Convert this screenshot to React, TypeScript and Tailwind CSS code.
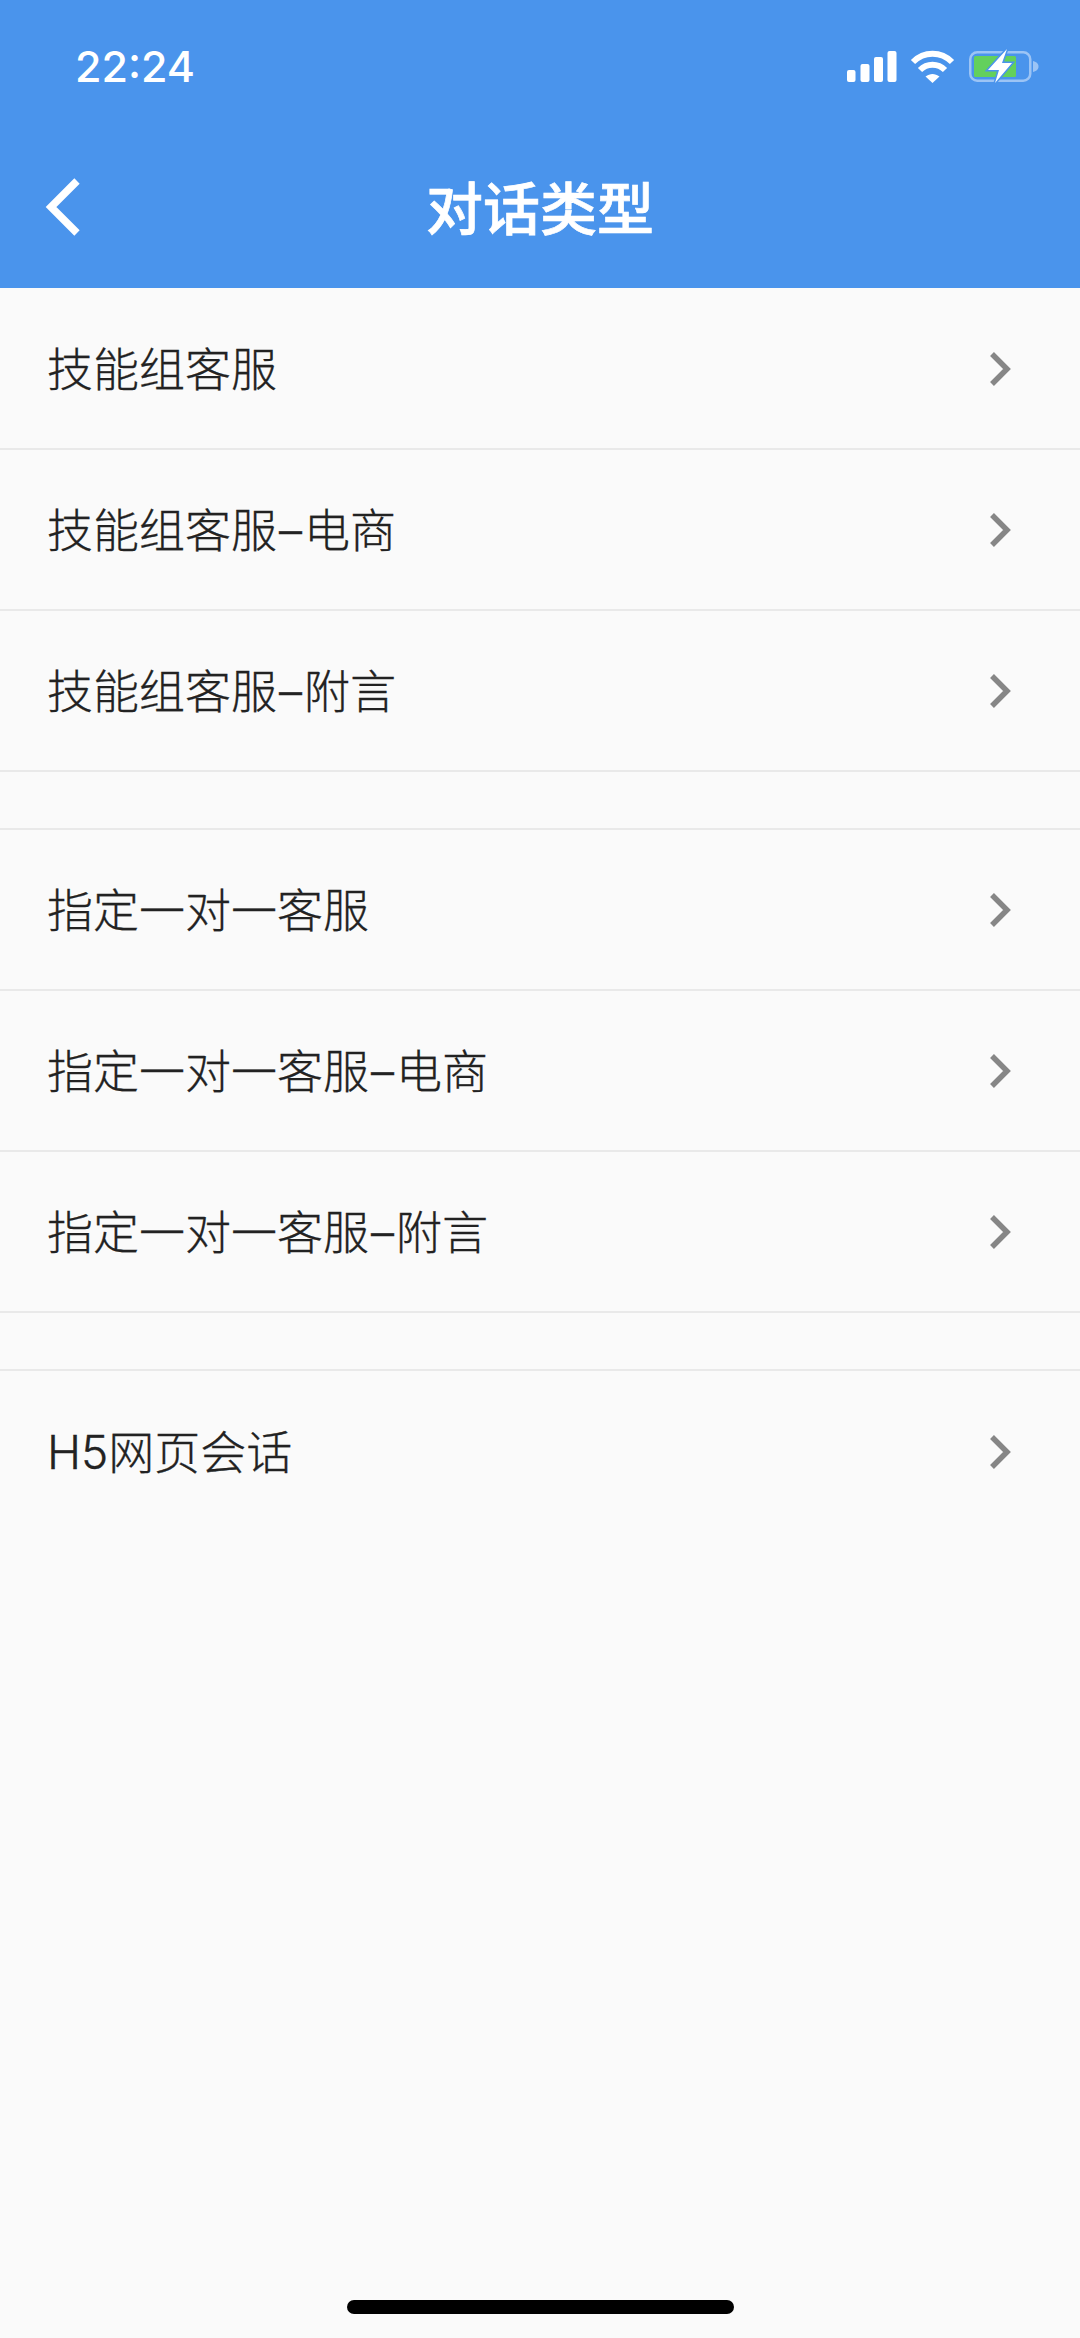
const groups = [
  ["技能组客服", "技能组客服-电商", "技能组客服-附言"],
  ["指定一对一客服", "指定一对一客服-电商", "指定一对一客服-附言"],
  ["H5网页会话"],
];

function StatusIcons() {
  return (
    <svg width="194" height="38" viewBox="0 0 194 38" className="mr-[39px]">
      <rect x="0" y="23" width="8.500" height="12" rx="2" fill="#fff" />
      <rect x="13.500" y="17" width="9" height="18" rx="2" fill="#fff" />
      <rect x="27" y="10" width="9" height="25" rx="2" fill="#fff" />
      <rect x="40.500" y="4" width="9" height="31" rx="2" fill="#fff" />
      <path d="M66 15C77 4 94 4 105 15" fill="none" stroke="#fff" strokeWidth="6" />
      <path d="M73 23C80 16 91 16 98 23" fill="none" stroke="#fff" strokeWidth="6" />
      <path d="M78.500 29.500C83 26 88 26 92.500 29.500L85.500 36Z" fill="#fff" />
      <rect x="123.250" y="5.250" width="60" height="28.500" rx="7" fill="none" stroke="#9cc4f5" strokeWidth="2.500" />
      <rect x="127" y="9" width="42" height="21" rx="1.500" fill="#63d05c" />
      <path d="M186 14C190 15 191.500 17 191.500 19.500C191.500 22 190 24 186 25Z" fill="#9cc4f5" />
      <path d="M160 2L141 23H152L148 36L165 16H155Z" fill="#fff" stroke="#4a94ec" strokeWidth="3" paintOrder="stroke" />
    </svg>
  );
}

function Row({ label, bordered }: { label: string; bordered: boolean }) {
  const [head, tail] = label.split("-");
  return (
    <div className={`flex h-[161px] items-center justify-between pl-[47px] pr-[68px] ${bordered ? "border-b-2 border-[#e9e9e9]" : ""}`}>
      <span
        className="text-[46px] font-light leading-none text-[#222222] [-webkit-text-stroke:0.3px_#222222]"
        style={{ fontFamily: 'Inter, "Noto Sans CJK SC", sans-serif' }}
      >
        {head}
        {tail && <span className="mx-[2px]">–</span>}
        {tail}
      </span>
      <svg width="24" height="36" viewBox="0 0 24 36">
        <path d="M4 3L19 18L4 33" fill="none" stroke="#868686" strokeWidth="5.500" />
      </svg>
    </div>
  );
}

export default function App() {
  return (
    <div
      className="relative h-[2338px] w-[1080px] overflow-hidden bg-[#fafafa]"
      style={{ fontFamily: '"Noto Sans CJK SC", "Liberation Sans", sans-serif' }}
    >
      <div className="h-[288px] bg-[#4a94ec] text-white">
        <div className="flex h-[130px] items-center justify-between pt-[2px]">
          <span className="ml-[75px] text-[43px] font-medium leading-none" style={{ fontFamily: "Inter, sans-serif" }}>22:24</span>
          <StatusIcons />
        </div>
        <div className="relative flex h-[158px] items-center justify-center pb-[8px]">
          <svg width="40" height="60" viewBox="0 0 40 60" className="absolute left-[44px] top-[47px]">
            <path d="M33 4L7 30L33 56" fill="none" stroke="#fff" strokeWidth="7.500" />
          </svg>
          <span className="text-[57px] font-medium leading-none [-webkit-text-stroke:0.7px_white]">对话类型</span>
        </div>
      </div>
      <div className="pt-[1px]">
        {groups.map((g, i) => (
          <div key={i} className={i > 0 ? "mt-[56px] border-t-2 border-[#e9e9e9]" : ""}>
            {g.map((label) => (
              <Row key={label} label={label} bordered={i < 2} />
            ))}
          </div>
        ))}
      </div>
      <div className="absolute bottom-[24px] left-[347px] h-[14px] w-[387px] rounded-full bg-black" />
    </div>
  );
}
